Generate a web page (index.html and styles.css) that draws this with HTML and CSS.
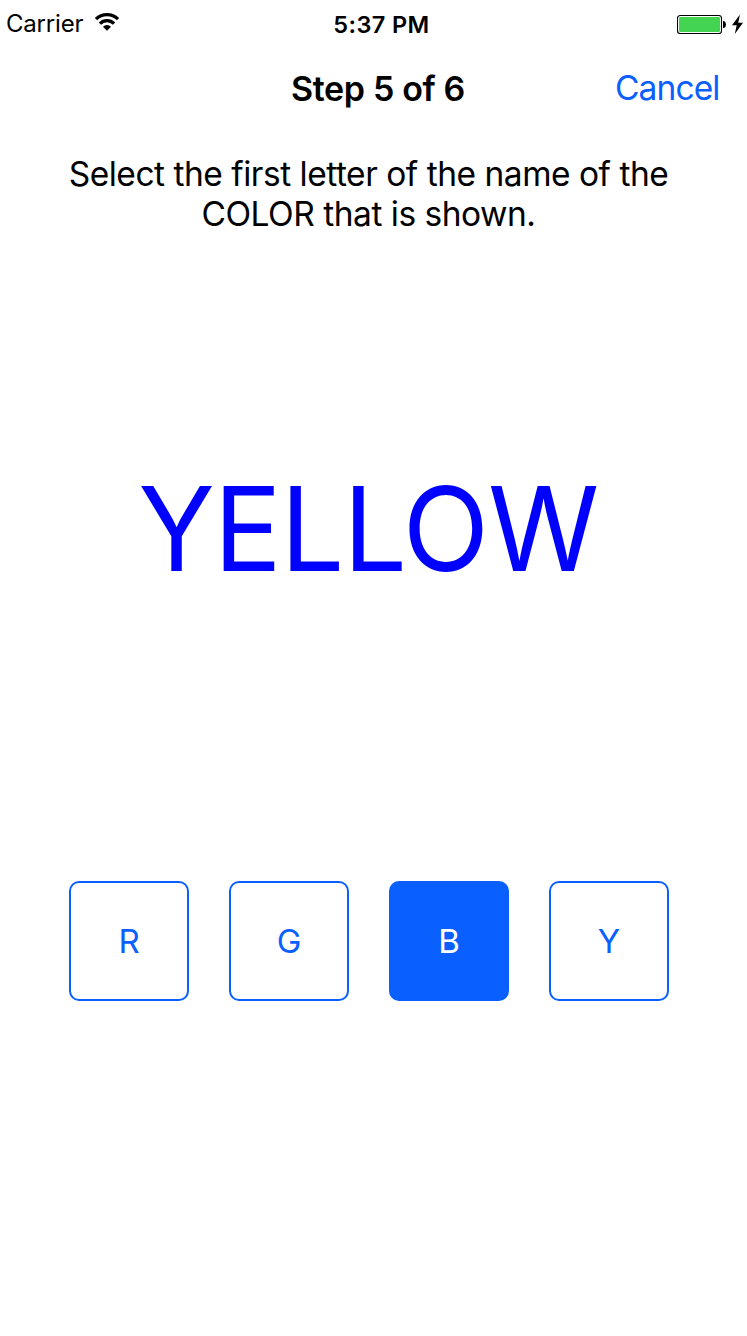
FILE: index.html
```html
<!DOCTYPE html>
<html lang="en">
<head>
<meta charset="utf-8">
<title>Step 5 of 6</title>
<link rel="stylesheet" href="styles.css">
</head>
<body>
<div class="status">
  <div class="carrier"><span class="carrier-name">Carrier</span>
    <svg class="wifi" viewBox="0 0 26 20" width="26" height="20"><path d="M0.8 6A17.5 17.5 0 0 1 25.2 6L22.9 8.3A14.2 14.2 0 0 0 3.1 8.3ZM4.8 10.4A11.5 11.5 0 0 1 21.2 10.4L18.9 12.7A8.2 8.2 0 0 0 7.1 12.7ZM9 14.8A5.5 5.5 0 0 1 17 14.8L13 18.8Z"/></svg>
  </div>
  <div class="time">5:37 PM</div>
  <div class="power">
    <svg viewBox="0 0 70 24" width="70" height="24"><rect x=".5" y="3.5" width="44" height="18" rx="2.8" fill="none" stroke="#000" stroke-width="1.1"/><rect x="2" y="5" width="41" height="15" rx="1.3" fill="#43d551"/><path d="M46 9H47Q49 10 49 12.5T47 16H46Z"/><path d="M63 2.5L55 13.2H59.7L57.8 22L66 10.8H61.2Z"/></svg>
  </div>
</div>
<header class="nav"><h1 class="title">Step 5 of 6</h1><a class="cancel">Cancel</a></header>
<p class="prompt"><span class="line line-one">Select the first letter of the name of the</span><span class="line line-two">COLOR that is shown.</span></p>
<main class="word">YELLOW</main>
<div class="choices">
  <button class="choice">R</button><button class="choice">G</button><button class="choice selected">B</button><button class="choice">Y</button>
</div>
</body>
</html>
```
FILE: styles.css
```css
* { box-sizing: border-box; }
body { margin: 0; width: 747px; height: 1336px; overflow: hidden; background: #fff; color: #000; font-family: Inter, sans-serif; }
.status { display: grid; grid-template-columns: 250px 1fr 250px; height: 48px; line-height: 48px; }
.carrier { display: flex; align-items: center; padding-left: 6px; font-size: 24px; letter-spacing: -.2px; gap: 10.5px; }
.carrier-name { line-height: 46px; height: 48px; }
.wifi { margin-top: -5px; }
.time { text-align: center; font-size: 23.5px; font-weight: 600; letter-spacing: .4px; padding: 1px 0 0 16px; white-space: nowrap; }
.power { display: flex; justify-content: flex-end; padding: 12px 0 0; }
.nav { display: grid; grid-template-columns: 200px 1fr 200px; height: 80px; line-height: 81px; }
.title { grid-column: 2; margin: 0; padding: 0 0 0 9px; font-size: 34px; font-weight: 600; letter-spacing: -.35px; text-align: center; white-space: nowrap; }
.cancel { color: #0a60ff; font-size: 33.5px; letter-spacing: -.9px; padding-right: 27.5px; text-align: right; }
.prompt { margin: 26px 0 0; padding-right: 10px; text-align: center; font-size: 33.5px; letter-spacing: -.48px; line-height: 40px; }
.line { display: block; white-space: nowrap; }
.word { margin-top: 220px; padding-right: 11px; text-align: center; color: #00f; font-size: 117px; letter-spacing: -1.2px; line-height: 150px; transform: scaleX(.965); }
.choices { display: flex; gap: 40px; margin: 277px 0 0 69px; }
.choice { width: 120px; height: 120px; border: 2px solid #0a60ff; border-radius: 10px; background: #fff; color: #0a60ff; font: 33px Inter, sans-serif; padding: 0; }
.selected { background: #0a60ff; color: #fff; }
```
